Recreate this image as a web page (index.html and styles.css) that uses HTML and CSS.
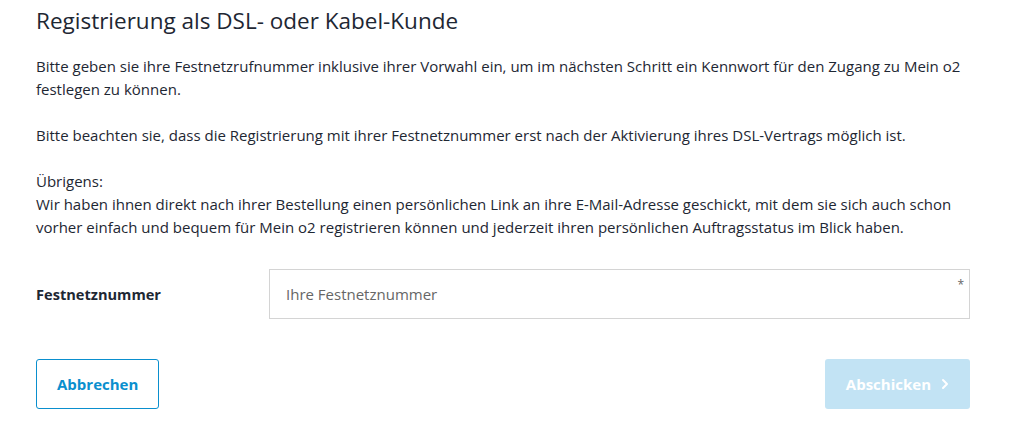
FILE: index.html
```html
<!DOCTYPE html>
<html lang="de">
<head>
<meta charset="utf-8">
<title>Registrierung</title>
<link rel="stylesheet" href="styles.css">
</head>
<body>
<main class="page">
  <h1 class="title">Registrierung als DSL- oder Kabel-Kunde</h1>
  <p class="text">Bitte geben sie ihre Festnetzrufnummer inklusive ihrer Vorwahl ein, um im nächsten Schritt ein Kennwort für den Zugang zu Mein o2 festlegen zu können.</p>
  <p class="text">Bitte beachten sie, dass die Registrierung mit ihrer Festnetznummer erst nach der Aktivierung ihres DSL-Vertrags möglich ist.</p>
  <p class="text">Übrigens:<br>Wir haben ihnen direkt nach ihrer Bestellung einen persönlichen Link an ihre E-Mail-Adresse geschickt, mit dem sie sich auch schon vorher einfach und bequem für Mein o2 registrieren können und jederzeit ihren persönlichen Auftragsstatus im Blick haben.</p>
  <div class="field">
    <label class="label" for="nr">Festnetznummer</label>
    <div class="input-wrap">
      <input id="nr" class="input" type="text" placeholder="Ihre Festnetznummer">
      <span class="req">*</span>
    </div>
  </div>
  <div class="actions">
    <button class="btn btn-outline" type="button">Abbrechen</button>
    <button class="btn btn-primary" type="button">Abschicken<svg class="chev" width="8" height="12" viewBox="0 0 8 12"><path d="M2 2l4 4-4 4" fill="none" stroke="currentColor" stroke-width="2" stroke-linecap="round" stroke-linejoin="round"/></svg></button>
  </div>
</main>
</body>
</html>
```
FILE: styles.css
```css
* { box-sizing: border-box; }
html, body { margin: 0; padding: 0; background: #fff; }
body { font-family: "Open Sans", "Noto Sans", sans-serif; color: #1e2733; }
.page { width: 970px; padding: 5px 0 0 36px; }
.title { font-size: 22.5px; font-weight: 400; line-height: 32px; margin: 0 0 18px; color: #1e2733; }
.text { font-size: 15px; line-height: 23px; margin: 0 0 23px; }
.field { display: flex; align-items: center; margin-top: 30px; }
.label { width: 233px; font-size: 14.6px; font-weight: 700; }
.input-wrap { position: relative; flex: 1; }
.input { width: 100%; height: 50px; border: 1px solid #d4d4d4; padding: 0 16px; font: inherit; font-size: 15px; color: #1e2733; outline: none; }
.input::placeholder { color: #666; }
.req { position: absolute; top: 7px; right: 6px; font-size: 12px; color: #666; }
.actions { display: flex; justify-content: space-between; margin-top: 40px; }
.btn { height: 50px; border-radius: 3px; font-family: inherit; font-size: 15px; font-weight: 700; padding: 0 20px; display: inline-flex; align-items: center; gap: 8px; cursor: pointer; }
.btn-outline { background: #fff; border: 1px solid #0a8fce; color: #0a8fce; }
.btn-primary { background: #c2e3f4; border: 0; color: #fff; padding: 0 21px; }
.chev { margin-left: 2px; }
```
